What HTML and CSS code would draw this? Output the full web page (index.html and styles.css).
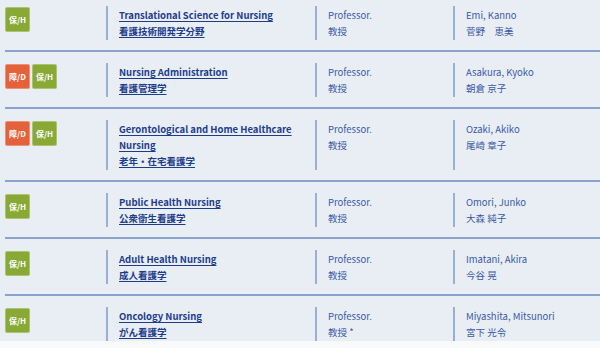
FILE: index.html
```html
<!DOCTYPE html>
<html>
<head>
    <meta charset="utf-8">
    <link rel="stylesheet" href="styles.css">
</head>
<body>
    <div class="staff-list">
        <div class="row">
            <div class="badges">
                <span class="badge badge-h">保/H</span>
            </div>
            <div class="cell">
                <a class="field" href="#">
                    <span class="field-en">Translational Science for Nursing</span>
                    <span class="field-ja">看護技術開発学分野</span>
                </a>
            </div>
            <div class="cell">
                <div class="line">Professor.</div>
                <div class="line">教授</div>
            </div>
            <div class="cell">
                <div class="line">Emi, Kanno</div>
                <div class="line">菅野　恵美</div>
            </div>
        </div>

        <div class="row">
            <div class="badges">
                <span class="badge badge-d">障/D</span>
                <span class="badge badge-h">保/H</span>
            </div>
            <div class="cell">
                <a class="field" href="#">
                    <span class="field-en">Nursing Administration</span>
                    <span class="field-ja">看護管理学</span>
                </a>
            </div>
            <div class="cell">
                <div class="line">Professor.</div>
                <div class="line">教授</div>
            </div>
            <div class="cell">
                <div class="line">Asakura, Kyoko</div>
                <div class="line">朝倉 京子</div>
            </div>
        </div>

        <div class="row">
            <div class="badges">
                <span class="badge badge-d">障/D</span>
                <span class="badge badge-h">保/H</span>
            </div>
            <div class="cell">
                <a class="field" href="#">
                    <span class="field-en">Gerontological and Home Healthcare Nursing</span>
                    <span class="field-ja">老年・在宅看護学</span>
                </a>
            </div>
            <div class="cell">
                <div class="line">Professor.</div>
                <div class="line">教授</div>
            </div>
            <div class="cell">
                <div class="line">Ozaki, Akiko</div>
                <div class="line">尾崎 章子</div>
            </div>
        </div>

        <div class="row">
            <div class="badges">
                <span class="badge badge-h">保/H</span>
            </div>
            <div class="cell">
                <a class="field" href="#">
                    <span class="field-en">Public Health Nursing</span>
                    <span class="field-ja">公衆衛生看護学</span>
                </a>
            </div>
            <div class="cell">
                <div class="line">Professor.</div>
                <div class="line">教授</div>
            </div>
            <div class="cell">
                <div class="line">Omori, Junko</div>
                <div class="line">大森 純子</div>
            </div>
        </div>

        <div class="row">
            <div class="badges">
                <span class="badge badge-h">保/H</span>
            </div>
            <div class="cell">
                <a class="field" href="#">
                    <span class="field-en">Adult Health Nursing</span>
                    <span class="field-ja">成人看護学</span>
                </a>
            </div>
            <div class="cell">
                <div class="line">Professor.</div>
                <div class="line">教授</div>
            </div>
            <div class="cell">
                <div class="line">Imatani, Akira</div>
                <div class="line">今谷 晃</div>
            </div>
        </div>

        <div class="row">
            <div class="badges">
                <span class="badge badge-h">保/H</span>
            </div>
            <div class="cell">
                <a class="field" href="#">
                    <span class="field-en">Oncology Nursing</span>
                    <span class="field-ja">がん看護学</span>
                </a>
            </div>
            <div class="cell">
                <div class="line">Professor.</div>
                <div class="line">教授 *</div>
            </div>
            <div class="cell">
                <div class="line">Miyashita, Mitsunori</div>
                <div class="line">宮下 光令</div>
            </div>
        </div>
    </div>
</body>
</html>
```

FILE: styles.css
```css
body {
    margin: 0;
    background: #f8f9fb;
    font-family: "Noto Sans CJK JP", "Noto Sans", sans-serif;
    font-size: 9.5px;
    line-height: 16px;
    color: #3a5aa5;
    overflow: hidden;
}

.staff-list {
    margin-top: -7px;
    padding-left: 5px;
    background: #e9eef5;
}

.row {
    display: grid;
    grid-template-columns: 101px 209px 138px 1fr;
    border-top: 2px solid #8aa2cd;
    padding: 11px 0 10px;
}

.row:last-child {
    padding-bottom: 0;
}

.badges {
    display: flex;
    align-items: flex-start;
    gap: 2px;
    padding-top: 1px;
}

.badge {
    display: flex;
    justify-content: center;
    align-items: center;
    width: 25px;
    height: 25px;
    box-sizing: border-box;
    border: 1px solid rgba(255, 255, 255, 0.3);
    border-radius: 2px;
    color: #fff;
    font-size: 8px;
    font-weight: bold;
    line-height: 1;
}

.badge-h {
    background: #88a935;
}

.badge-d {
    background: #e3623b;
}

.cell {
    border-left: 2px solid #9cafd3;
    padding: 1px 8px 1px 11px;
}

.field {
    display: flex;
    flex-direction: column;
    align-items: flex-start;
    color: #1d3d8a;
    font-weight: bold;
    text-decoration: none;
}

.field-en,
.field-ja {
    text-decoration: underline;
    text-decoration-thickness: 1px;
    text-underline-offset: 2px;
}

.line {
    white-space: nowrap;
}
```
